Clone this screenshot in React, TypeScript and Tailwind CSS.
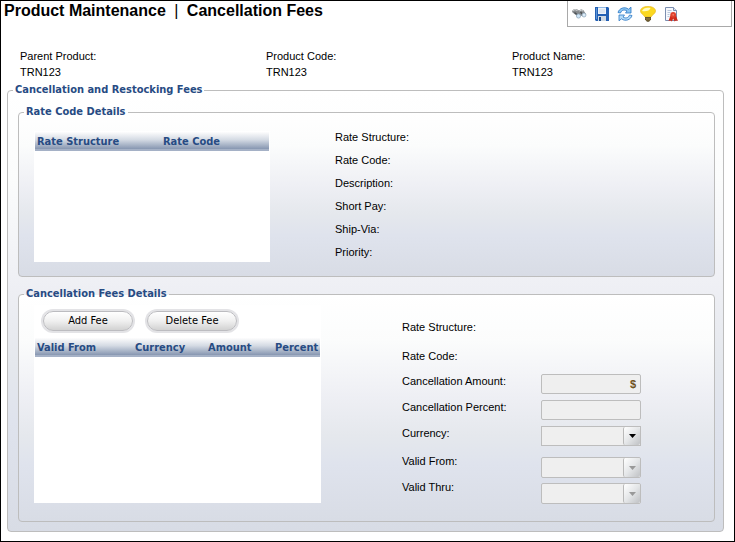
import type { ReactNode } from "react";

const productInfo = [
  { label: "Parent Product:", value: "TRN123" },
  { label: "Product Code:", value: "TRN123" },
  { label: "Product Name:", value: "TRN123" },
];

const rateLabels = [
  "Rate Structure:",
  "Rate Code:",
  "Description:",
  "Short Pay:",
  "Ship-Via:",
  "Priority:",
];

function FindIcon() {
  return (
    <svg viewBox="0 0 16 16" className="w-4 h-4">
      <path d="M1 5 3 3l3 .3 2 1.200 2.200-1.200 2.300 1 2.500 4-1.500 2-2.500-.3L8 9 5.500 9.500 1.500 6.500z" fill="#85898c" />
      <path d="M2 4.500 4 3.600l2.500 1M8.500 5l2-.8 1.700 1" stroke="#d5d8da" strokeWidth="1" fill="none" />
      <path d="M3.500 6.500 6 8.500M9.500 6l2 2.300" stroke="#4a4e51" strokeWidth="1.300" />
      <circle cx="7.500" cy="10" r="2.100" fill="#cfe5f7" stroke="#8aa2b6" strokeWidth=".7" />
      <circle cx="13" cy="9" r="2" fill="#dcecf9" stroke="#8aa2b6" strokeWidth=".7" />
    </svg>
  );
}

function SaveIcon() {
  return (
    <svg viewBox="0 0 16 16" className="w-4 h-4">
      <path d="M1 1h13l1 1v13H2l-1-1z" fill="#2360b4" />
      <path d="M2 2h1v11H2z" fill="#5b94d6" />
      <path d="M4 1h8v7H4z" fill="#eef4fb" />
      <path d="M4 1h8v1H4z" fill="#8fb8e4" />
      <path d="M5 4h6M5 6h6" stroke="#c3d3e6" strokeWidth=".8" />
      <path d="M4 10h8v5H4z" fill="#d0d9e3" />
      <path d="M5 11h2v4H5z" fill="#174a8a" />
    </svg>
  );
}

function RefreshIcon() {
  return (
    <svg viewBox="0 0 16 16" className="w-4 h-4">
      <g stroke="#2a76c4" strokeWidth=".8" strokeLinejoin="round">
        <path d="M1 6.500C2 2.500 7.500 0 11.500 3.200L14 1.200V7H8.500L10 5C7.500 3.200 4.500 4 3.500 7z" fill="#8cc5f2" />
        <path d="M15 9.500C14 13.500 8.500 16 4.500 12.800L2 14.800V9h5.500L6 11c2.500 1.800 5.500 1 6.500-2z" fill="#b5dcf8" />
      </g>
    </svg>
  );
}

function HintIcon() {
  return (
    <svg viewBox="0 0 16 16" className="w-4 h-4">
      <path d="M8 .5C3.500.5.5 2.300.5 5c0 2.500 3 3.500 4.500 6h6c1.500-2.500 4.500-3.500 4.500-6 0-2.700-3-4.500-7.500-4.500z" fill="#fbd820" stroke="#e8b822" strokeWidth=".7" />
      <path d="M2 5C3 2 7 1 10.500 2 10 4.500 6 6 2 5z" fill="#fffbc0" />
      <path d="M5 11h6v2.500L9 15.700H7l-2-2.200z" fill="#5d4e2a" />
      <path d="M5.500 12.300h5M6 13.800h4" stroke="#a58c4c" strokeWidth=".7" />
    </svg>
  );
}

function CertificateIcon() {
  return (
    <svg viewBox="0 0 16 16" className="w-4 h-4">
      <path d="M2.500 1.500h8l3 3v10h-11z" fill="#f6f8fc" stroke="#7b8eb0" />
      <path d="M10.500 1.500v3h3" fill="#dce4f0" stroke="#7b8eb0" />
      <path d="M4.500 4.500h4M4.500 6.500h3M4.500 8.500h2M4.500 10.500h2" stroke="#b9c6da" />
      <path d="M7.500 9.500 5.500 15l2-.6 1.300 1.100 1.400-3 1.400 3 1.300-1.100 2 .6-2-5.500z" fill="#cf2a1a" />
      <circle cx="10.200" cy="8.800" r="2.900" fill="#e0402d" />
      <circle cx="10.200" cy="8.800" r="1" fill="#ef7a62" />
    </svg>
  );
}

const tools = [
  { name: "Find", icon: <FindIcon /> },
  { name: "Save", icon: <SaveIcon /> },
  { name: "Refresh", icon: <RefreshIcon /> },
  { name: "Hint", icon: <HintIcon /> },
  { name: "Certificate", icon: <CertificateIcon /> },
];

function Panel({ title, children }: { title: string; children: ReactNode }) {
  return (
    <fieldset className="min-w-0 rounded-[4px] border border-[#bdbdbd] bg-[linear-gradient(to_bottom,#ffffff_0%,#fbfcfc_20%,#eeeff4_45%,#e5e8ed_62%,#dfe3ed_75%,#d8dce5_100%)]">
      <legend className="ml-[5px] px-[2px] font-['DejaVu_Sans_Condensed','DejaVu_Sans',sans-serif] text-[11px] leading-[14px] font-bold text-[#274b83]">
        {title}
      </legend>
      {children}
    </fieldset>
  );
}

function HeaderCell({ children }: { children: ReactNode }) {
  return <th className="p-0 pl-[2px] text-left font-bold whitespace-nowrap">{children}</th>;
}

const tableClass =
  "w-full table-fixed font-['DejaVu_Sans_Condensed','DejaVu_Sans',sans-serif] text-[11px] leading-[19px] text-[#274b83]";
const headClass =
  "bg-[linear-gradient(to_bottom,#fdfdfd,#d5dbe4_40%,#8797b1_89%,#a5b1c6_89%)]";

function FeeButton({ children }: { children: ReactNode }) {
  return (
    <button
      type="button"
      className="h-5 w-[90px] rounded-full border border-[#bcbcc0] bg-linear-to-b from-white via-[#f0f0f0] to-[#d2d2d2] font-['DejaVu_Sans_Condensed','DejaVu_Sans',sans-serif] text-[11px] leading-4 ring-2 ring-[#e3e3e6]"
    >
      {children}
    </button>
  );
}

function Row({ id, label, children }: { id: string; label: string; children: ReactNode }) {
  return (
    <div className="flex items-start">
      <label htmlFor={id} className="w-[139px] shrink-0 leading-[14px]">
        {label}
      </label>
      <div className="relative w-[100px]">{children}</div>
    </div>
  );
}

// date pickers hang a little lower than their labels
function DateRow({ id, label }: { id: string; label: string }) {
  return (
    <div className="flex items-start">
      <label htmlFor={id} className="w-[139px] shrink-0 leading-[14px]">
        {label}
      </label>
      <div className="relative mt-[3px] w-[100px]">
        <select id={id} disabled className={`${fieldClass} h-[21px] appearance-none rounded-[2px]`} />
        <Arrow muted />
      </div>
    </div>
  );
}

function Arrow({ muted }: { muted?: boolean }) {
  return (
    <span className="pointer-events-none absolute inset-y-px right-px flex w-[17px] items-center justify-center rounded-[2px] border-l border-[#b9b9b9] bg-linear-to-br from-white via-[#e4e6e8] to-[#bfc1c4]">
      <svg viewBox="0 0 7 4" className={muted ? "h-1 w-[7px] fill-[#999999]" : "h-1 w-[7px] fill-black"}>
        <path d="M0 0h7L3.500 4z" />
      </svg>
    </span>
  );
}

const fieldClass = "block w-full border border-[#bdbdbd] bg-[#efefef] px-1 text-[11px] leading-4";

export default function App() {
  return (
    <div className="min-h-screen border border-black bg-white pb-[9px] font-['Liberation_Sans',Arial,sans-serif] text-[11px] text-black">
      <header className="flex items-start justify-between pr-[2px] pl-[3px]">
        <h1 className="text-[16px] leading-5 font-bold whitespace-pre">
          Product Maintenance <span className="px-1 font-normal">|</span> Cancellation Fees
        </h1>
        <div className="flex h-[26px] w-[165px] gap-[7px] border border-t-0 border-[#a9a9a9] pt-[5px] pl-[3px]">
          {tools.map((tool) => (
            <button key={tool.name} type="button" aria-label={tool.name} className="h-4 w-4">
              {tool.icon}
            </button>
          ))}
        </div>
      </header>

      <dl className="mt-[21px] grid grid-cols-3 gap-x-6 pl-[19px] leading-4">
        {productInfo.map((info) => (
          <div key={info.label}>
            <dt>{info.label}</dt>
            <dd>{info.value}</dd>
          </div>
        ))}
      </dl>

      <main className="mt-[3px] pr-[10px] pl-[6px]">
        <Panel title="Cancellation and Restocking Fees">
          <div className="flex flex-col gap-[10px] pt-2 pr-2 pb-[9px] pl-[10px]">
            <Panel title="Rate Code Details">
              <div className="flex items-start pt-[7px] pb-3 pl-[15px]">
                <div className="mt-[5px] h-[131px] w-[236px] bg-white px-px pt-px">
                  <table className={tableClass}>
                    <thead className={headClass}>
                      <tr>
                        <HeaderCell>Rate Structure</HeaderCell>
                        <HeaderCell>
                          <span className="pl-[9px]">Rate Code</span>
                        </HeaderCell>
                      </tr>
                    </thead>
                  </table>
                </div>
                <ul className="ml-[65px] leading-[23px]">
                  {rateLabels.map((label) => (
                    <li key={label}>{label}</li>
                  ))}
                </ul>
              </div>
            </Panel>

            <Panel title="Cancellation Fees Details">
              <div className="flex items-start pt-1 pb-[17px] pl-[15px]">
                <div className="h-[198px] w-[287px] bg-white px-px pt-[6px]">
                  <div className="mb-[7px] flex gap-[14px] pl-2">
                    <FeeButton>Add Fee</FeeButton>
                    <FeeButton>Delete Fee</FeeButton>
                  </div>
                  <table className={tableClass}>
                    <colgroup>
                      <col className="w-[98px]" />
                      <col className="w-[73px]" />
                      <col className="w-[67px]" />
                      <col />
                    </colgroup>
                    <thead className={headClass}>
                      <tr>
                        <HeaderCell>Valid From</HeaderCell>
                        <HeaderCell>Currency</HeaderCell>
                        <HeaderCell>Amount</HeaderCell>
                        <HeaderCell>Percent</HeaderCell>
                      </tr>
                    </thead>
                  </table>
                </div>

                <form className="ml-[81px] pt-2">
                  <div className="mb-[3px] leading-[29px]">
                    <p>Rate Structure:</p>
                    <p>Rate Code:</p>
                  </div>
                  <div className="flex flex-col gap-[6px]">
                    <Row id="amount" label="Cancellation Amount:">
                      <input id="amount" type="text" disabled className={`${fieldClass} h-5 rounded-[2px]`} />
                      <span className="absolute top-[2px] right-[5px] leading-4 font-bold text-[#6e5220]">$</span>
                    </Row>
                    <Row id="percent" label="Cancellation Percent:">
                      <input id="percent" type="text" disabled className={`${fieldClass} h-5 rounded-[2px]`} />
                    </Row>
                    <Row id="currency" label="Currency:">
                      <select id="currency" className={`${fieldClass} h-5 appearance-none`} />
                      <Arrow />
                    </Row>
                  </div>
                  <div className="mt-2 flex flex-col gap-[2px]">
                    <DateRow id="from" label="Valid From:" />
                    <DateRow id="thru" label="Valid Thru:" />
                  </div>
                </form>
              </div>
            </Panel>
          </div>
        </Panel>
      </main>
    </div>
  );
}
